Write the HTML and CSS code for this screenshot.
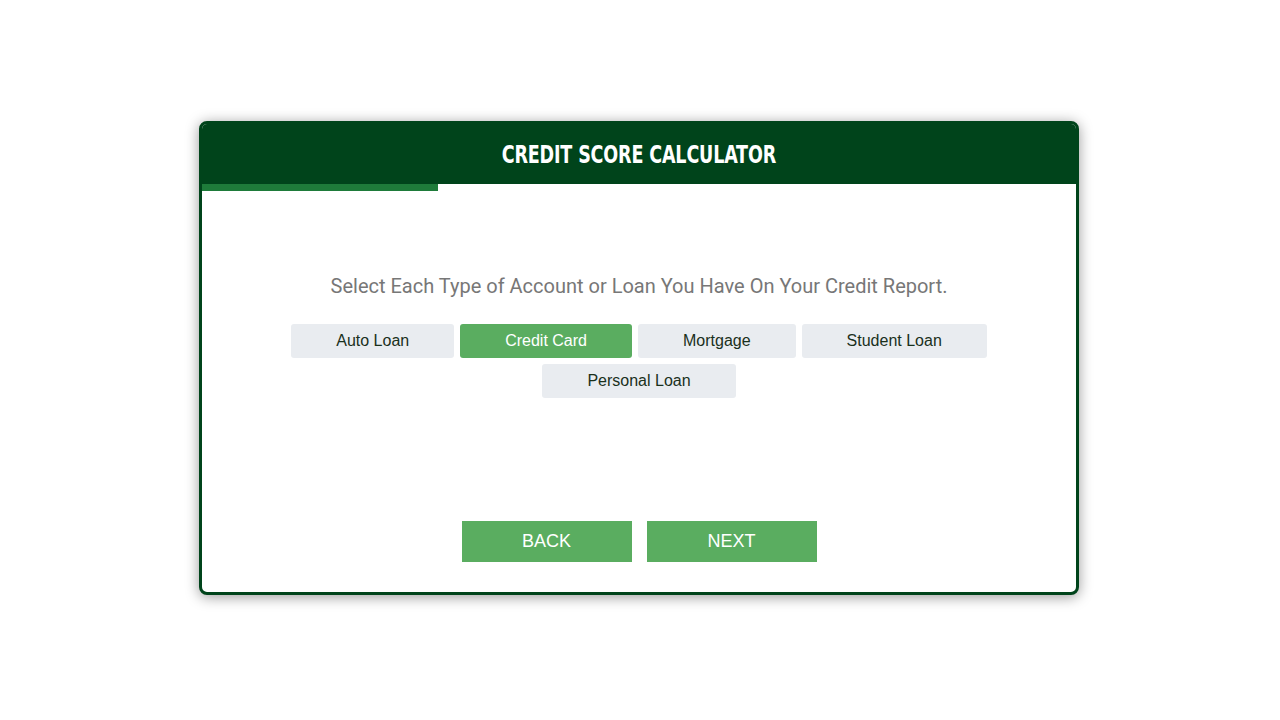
FILE: index.html
```html
<!DOCTYPE html>
<html>
<head>
<meta charset="utf-8">
<link rel="stylesheet" href="styles.css">
</head>
<body>
<div class="card">
  <div class="header"><h1 class="title">CREDIT SCORE CALCULATOR</h1></div>
  <div class="progress"><div class="progress-fill" style="width: 236px"></div></div>
  <div class="content">
    <p class="question">Select Each Type of Account or Loan You Have On Your Credit Report.</p>
    <div class="options">
      <button class="opt">Auto Loan</button>
      <button class="opt active">Credit Card</button>
      <button class="opt">Mortgage</button>
      <button class="opt">Student Loan</button>
      <button class="opt">Personal Loan</button>
    </div>
    <div class="nav">
      <button class="nav-btn">BACK</button>
      <button class="nav-btn">NEXT</button>
    </div>
  </div>
</div>
</body>
</html>
```
FILE: styles.css
```css
* { box-sizing: border-box; }
html, body { margin: 0; padding: 0; background: #fff; }
body { padding: 121px 0 60px; min-height: 720px; }
.card {
  width: 880px;
  margin: 0 auto;
  position: relative;
  left: -1px;
  border: 3px solid #00441b;
  border-radius: 8px;
  overflow: hidden;
  box-shadow: 0 2px 14px rgba(0,0,0,0.4);
  background: #fff;
}
.header {
  background: #00441b;
  height: 63px;
  display: flex;
  align-items: center;
  justify-content: center;
  margin: -3px -3px 0;
  padding-top: 3px;
}
.title {
  margin: 0;
  color: #fff;
  font-family: "DejaVu Sans Condensed", "DejaVu Sans", sans-serif;
  font-weight: bold;
  font-size: 25px;
  letter-spacing: -0.2px;
  line-height: 1;
  transform: scaleX(0.78);
}
.progress { height: 7px; background: #fff; }
.progress-fill { height: 7px; background: #1e7b3a; }
.content {
  padding: 83px 0 30px;
  display: flex;
  flex-direction: column;
  align-items: center;
}
.question {
  margin: 0;
  font-family: Roboto, sans-serif;
  font-size: 20px;
  line-height: 24px;
  color: #777;
}
.options {
  margin-top: 26px;
  width: 720px;
  display: flex;
  flex-wrap: wrap;
  justify-content: center;
  gap: 6px;
}
.opt {
  height: 34px;
  padding: 0 45px;
  border: none;
  border-radius: 3px;
  background: #e9ecf0;
  color: #1a301c;
  font-family: "Liberation Sans", Arial, sans-serif;
  font-size: 16px;
}
.opt.active { background: #5aad60; color: #fff; }
.nav {
  margin-top: 123px;
  display: flex;
  gap: 15px;
}
.nav-btn {
  width: 170px;
  height: 41px;
  border: none;
  background: #5aad60;
  color: #fff;
  font-family: "Liberation Sans", Arial, sans-serif;
  font-size: 18px;
}
```
